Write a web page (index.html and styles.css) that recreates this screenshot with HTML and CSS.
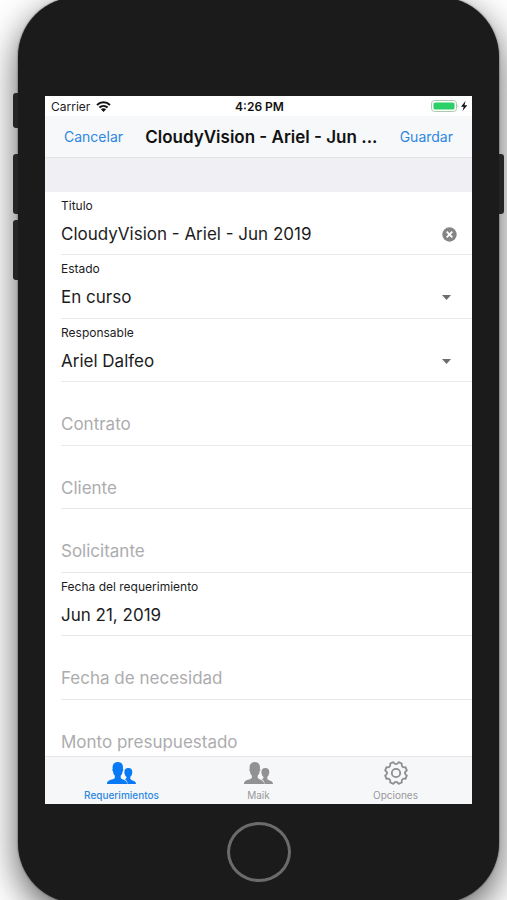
FILE: index.html
```html
<!DOCTYPE html>
<html lang="es">
<head>
<meta charset="utf-8">
<meta name="viewport" content="width=device-width, initial-scale=1">
<title>Requerimientos</title>
<link rel="stylesheet" href="styles.css">
</head>
<body>
<svg class="defs" aria-hidden="true">
  <symbol id="people" viewBox="0 0 29 22">
    <path d="M0 22 C0 19 2 18.200 5 17.500 C7.500 17 8.300 16 7.800 13.500 C6.500 12.500 6.300 11 6 9.500 C5.200 8.500 5.200 7.500 5.700 6.800 C5 2.500 7.500 0 10.800 0 C14.500 0 16.500 2.500 15.900 6.800 C16.400 7.500 16.400 8.500 15.600 9.500 C15.300 11 15 12.500 13.800 13.500 C13.300 16 14 17 16.200 17.500 C18.500 18.200 19.500 19.500 20.500 22 Z"/>
    <path d="M20.500 22 C20.500 19.500 19.500 18.200 17.700 17 C19.500 16.700 19.800 16 19.300 14.800 C18.200 14 17.900 13 17.700 11.800 C17.200 11 17.200 10.500 17.500 10 C17.200 7.500 18.800 6 21.300 6 C23.800 6 25.500 7.500 25.200 10 C25.500 10.500 25.400 11 25 11.800 C24.800 13 24.400 14 23.400 14.800 C22.900 17 23.500 17.800 25.500 18.400 C27.800 19 29 20 29 22 Z"/>
  </symbol>
</svg>
<div class="phone">
  <span class="side-key mute"></span>
  <span class="side-key volume-up"></span>
  <span class="side-key volume-down"></span>
  <span class="side-key power"></span>
  <div class="screen">
    <div class="status">
      <div class="carrier">
        <span>Carrier</span>
        <svg width="15" height="11" viewBox="0 0 15 11" fill="none" stroke="#111" stroke-width="2" aria-hidden="true">
          <path d="M1 4 C4.800 .4 10.200 .4 14 4"/>
          <path d="M3.400 6.600 C5.800 4.400 9.200 4.400 11.600 6.600"/>
          <path d="M4.900 8.300 Q7.500 6.300 10.100 8.300 L7.500 10.900 Z" fill="#111" stroke="none"/>
        </svg>
      </div>
      <time>4:26 PM</time>
      <div class="power-state">
        <svg width="37" height="12" viewBox="0 0 37 12" aria-hidden="true">
          <rect x=".5" y=".5" width="25" height="11" rx="3" fill="#fff" stroke="#a9c8ac"/>
          <rect x="2.500" y="2.500" width="21" height="7" rx="1.500" fill="#2bd067"/>
          <path d="M26.700 4 Q28.500 6 26.700 8 Z" fill="#a9c8ac"/>
          <path d="M34.500 1 L30 6.700 H32.700 L31.500 11 L36.300 5.200 H33.500 Z" fill="#111"/>
        </svg>
      </div>
    </div>
    <header class="nav">
      <button type="button">Cancelar</button>
      <h1>CloudyVision - Ariel - Jun ...</h1>
      <button type="button">Guardar</button>
    </header>
    <form class="form">
      <div class="field">
        <label for="titulo">Titulo</label>
        <input id="titulo" type="text" value="CloudyVision - Ariel - Jun 2019">
        <button class="clear" type="button" aria-label="Borrar">
          <svg width="15" height="15" viewBox="0 0 15 15" aria-hidden="true">
            <circle cx="7.500" cy="7.500" r="7.200" fill="#858587"/>
            <path d="M4.700 4.700 L10.300 10.300 M10.300 4.700 L4.700 10.300" stroke="#fff" stroke-width="1.800"/>
          </svg>
        </button>
      </div>
      <div class="field">
        <label for="estado">Estado</label>
        <select id="estado"><option>En curso</option></select>
        <svg class="arrow" width="9" height="5" viewBox="0 0 9 5" aria-hidden="true"><path d="M0 0 H9 L4.500 5 Z"/></svg>
      </div>
      <div class="field">
        <label for="responsable">Responsable</label>
        <select id="responsable"><option>Ariel Dalfeo</option></select>
        <svg class="arrow" width="9" height="5" viewBox="0 0 9 5" aria-hidden="true"><path d="M0 0 H9 L4.500 5 Z"/></svg>
      </div>
      <div class="field empty">
        <label for="contrato">Contrato</label>
        <input id="contrato" type="text">
      </div>
      <div class="field empty">
        <label for="cliente">Cliente</label>
        <input id="cliente" type="text">
      </div>
      <div class="field empty">
        <label for="solicitante">Solicitante</label>
        <input id="solicitante" type="text">
      </div>
      <div class="field">
        <label for="fecha">Fecha del requerimiento</label>
        <input id="fecha" type="text" value="Jun 21, 2019">
      </div>
      <div class="field empty">
        <label for="necesidad">Fecha de necesidad</label>
        <input id="necesidad" type="text">
      </div>
      <div class="field empty">
        <label for="monto">Monto presupuestado</label>
        <input id="monto" type="text">
      </div>
    </form>
    <nav class="tabs">
      <a class="active" href="#requerimientos">
        <svg width="29" height="22" aria-hidden="true"><use href="#people"/></svg>
        <span>Requerimientos</span>
      </a>
      <a href="#maik">
        <svg width="29" height="22" aria-hidden="true"><use href="#people"/></svg>
        <span>Maik</span>
      </a>
      <a href="#opciones">
        <svg width="26" height="24" viewBox="-13 -12 26 24" aria-hidden="true">
          <g fill="none" stroke="#8e8e90" stroke-width="1.800" stroke-linejoin="round">
            <path d="M-2.600 -10.800 Q0 -7 2.600 -10.800 L5.800 -9.500 Q5.100 -5.100 9.500 -5.800 L10.800 -2.600 Q7 0 10.800 2.600 L9.500 5.800 Q5.100 5.100 5.800 9.500 L2.600 10.800 Q0 7 -2.600 10.800 L-5.800 9.500 Q-5.100 5.100 -9.500 5.800 L-10.800 2.600 Q-7 0 -10.800 -2.600 L-9.500 -5.800 Q-5.100 -5.100 -5.800 -9.500 Z"/>
            <circle r="4.200"/>
          </g>
        </svg>
        <span>Opciones</span>
      </a>
    </nav>
  </div>
  <div class="chin"><button class="home" type="button" aria-label="Inicio"></button></div>
</div>
</body>
</html>
```
FILE: styles.css
```css
* { box-sizing: border-box; }

body {
  margin: 0;
  padding: 0 8px 0 18px;
  height: 100vh;
  overflow: hidden;
  background: #fff;
  font-family: Inter, "Liberation Sans", sans-serif;
  color: #1c1c1e;
}

button, input, select {
  font: inherit;
  color: inherit;
  background: none;
  border: 0;
  margin: 0;
  padding: 0;
}

.defs { display: none; }

.phone {
  position: relative;
  display: flex;
  flex-direction: column;
  height: calc(100vh + 6px);
  margin-top: -3px;
  padding: 99px 27px 0;
  border-radius: 60px;
  background: #1b1b1b;
  box-shadow: 0 12px 36px rgba(0, 0, 0, .65), 0 0 2px #555;
}

.side-key {
  position: absolute;
  width: 5px;
  background: #242424;
}
.mute, .volume-up, .volume-down { left: -5px; border-radius: 3px 0 0 3px; }
.mute { top: 96px; height: 35px; }
.volume-up { top: 157px; height: 60px; }
.volume-down { top: 223px; height: 60px; }
.power { top: 157px; right: -5px; height: 60px; border-radius: 0 3px 3px 0; }

.screen {
  flex: 1;
  min-height: 0;
  display: flex;
  flex-direction: column;
  background: #fff;
}

.status {
  flex: none;
  display: grid;
  grid-template-columns: 1fr auto 1fr;
  align-items: center;
  height: 20px;
  padding: 0 4px 0 6px;
  font-size: 12px;
}
.status time { font-weight: 600; color: #111; }
.carrier { display: flex; align-items: center; gap: 6px; }
.power-state { display: flex; justify-content: flex-end; }

.nav {
  flex: none;
  display: flex;
  align-items: center;
  justify-content: space-between;
  height: 42px;
  padding: 0 19px;
  background: #f7f8fa;
  border-bottom: 1px solid #e3e3e6;
}
.nav h1 {
  margin: 0;
  font-size: 17px;
  font-weight: 600;
  white-space: nowrap;
  color: #111;
}
.nav button { font-size: 14px; color: #2d87e2; }

.form {
  flex: 1;
  min-height: 0;
  overflow: hidden;
  display: grid;
  grid-auto-rows: 63px 64px;
  align-content: start;
  border-top: 34px solid #efeff4;
}

.field {
  display: grid;
  grid-template-columns: 1fr 16px;
  grid-template-rows: 26px 32px;
  align-items: center;
  margin-left: 16px;
  padding-right: 14px;
  border-bottom: 1px solid #e9e9eb;
}
.field label { grid-area: 1 / 1; font-size: 12px; }
.field input, .field select {
  grid-area: 2 / 1;
  width: 100%;
  height: 32px;
  font-size: 17px;
  appearance: none;
  outline: none;
}
.field.empty label { grid-area: 2 / 1; font-size: 17px; color: #acacae; }
.clear { grid-area: 2 / 2; display: flex; }
.arrow { grid-area: 2 / 2; justify-self: start; fill: #6d6d6f; }

.tabs {
  flex: none;
  display: grid;
  grid-template-columns: repeat(3, 1fr);
  height: 48px;
  padding: 0 8px;
  background: #f6f7f9;
  border-top: 1px solid #e6e6e9;
}
.tabs a {
  display: grid;
  grid-template-rows: 32px 13px;
  place-items: center;
  align-content: start;
  font-size: 10px;
  line-height: 13px;
  text-decoration: none;
  color: #98989a;
  fill: #929294;
}
.tabs .active { color: #2d87e2; fill: #077af5; font-weight: 500; }

.chin {
  flex: none;
  display: flex;
  justify-content: center;
  height: 99px;
  padding-top: 18px;
}
.home {
  width: 64px;
  height: 60px;
  border: 3px solid #6b6b6b;
  border-radius: 50%;
}
```
